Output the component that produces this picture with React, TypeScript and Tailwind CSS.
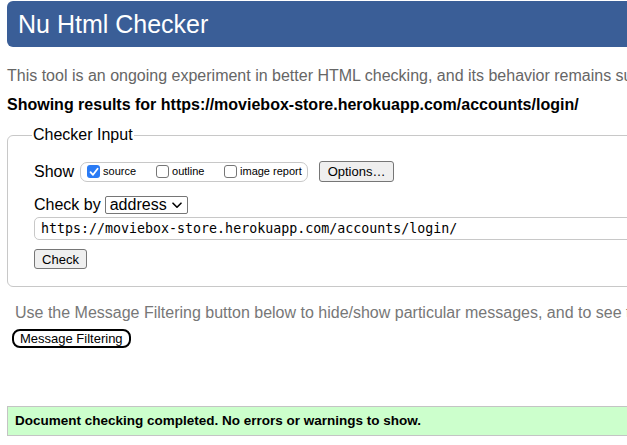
import type { ReactNode } from 'react';

const sans = 'font-["Liberation_Sans",Arial,sans-serif]';

function Box({ checked, label }: { checked?: boolean; label: string }) {
    return (
        <span className="flex items-center">
            {checked ? (
                <span className="w-[13px] h-[13px] rounded-[3px] bg-[#2a7bf5] flex items-center justify-center">
                    <svg width="10" height="10" viewBox="0 0 10 10" fill="none">
                        <path d="M1.5 5.2 L4 7.8 L8.6 1.8" stroke="white" strokeWidth="1.8" strokeLinecap="round" strokeLinejoin="round" />
                    </svg>
                </span>
            ) : (
                <span className="w-[13px] h-[13px] rounded-[3px] border border-[#767676] bg-white" />
            )}
            <span className="ml-[3px] text-[11px] leading-[13px] text-black">{label}</span>
        </span>
    );
}

function Row({ children, className = '' }: { children: ReactNode; className?: string }) {
    return <div className={`flex items-center ${className}`}>{children}</div>;
}

export default function App() {
    return (
        <div className={`w-[627px] h-[445px] overflow-hidden bg-white ${sans}`}>
            <div className="w-[1100px] pl-[7px] pt-[1px]">
                {/* header */}
                <div className="h-[46px] rounded-[6px] bg-[#3a5e97] flex items-center pl-[11px]">
                    <h1 className="text-[25px] text-white leading-none">Nu Html Checker</h1>
                </div>

                <p className="mt-[20px] text-[16px] leading-[18px] text-[#666] whitespace-nowrap">
                    This tool is an ongoing experiment in better HTML checking, and its behavior remains subject to change
                </p>
                <p className="mt-[11px] text-[16px] leading-[18px] font-bold text-black whitespace-nowrap">
                    Showing results for https://moviebox-store.herokuapp.com/accounts/login/
                </p>

                {/* checker input */}
                <fieldset className="mt-[12px] border border-[#c8c8c8] rounded-[6px] pl-[26px] pr-4 pb-[17px] pt-[17px]">
                    <legend className="-ml-[2px] px-[1px] text-[16px] leading-[18px] text-black">Checker Input</legend>

                    <Row className="h-[21px]">
                        <span className="text-[16px] leading-[18px] text-black">Show</span>
                        <div className="ml-[6px] h-[20px] w-[228px] rounded-[7px] border border-[#c8c8c8] flex items-center pl-[6px]">
                            <span className="w-[69px]"><Box checked label="source" /></span>
                            <span className="w-[68px]"><Box label="outline" /></span>
                            <Box label="image report" />
                        </div>
                        <button className="ml-[11px] h-[21px] w-[75px] border border-[#767676] rounded-[3px] bg-[#efefef] text-[13px] leading-[15px] text-black">
                            Options…
                        </button>
                    </Row>

                    <Row className="mt-[14px] h-[18px]">
                        <span className="text-[16px] leading-[18px] text-black">Check by</span>
                        <div className="ml-[4px] h-[18px] w-[83px] border border-[#767676] rounded-[2px] flex items-center justify-between pl-[4px] pr-[5px]">
                            <span className="text-[16px] text-black leading-none">address</span>
                            <svg width="10" height="7" viewBox="0 0 10 7" fill="none">
                                <path d="M1 1.2 L5 5.2 L9 1.2" stroke="black" strokeWidth="1.6" strokeLinecap="round" strokeLinejoin="round" />
                            </svg>
                        </div>
                    </Row>

                    <div className="mt-[3px] h-[23px] border border-[#c8c8c8] rounded-[5px] flex items-center pl-[6px]">
                        <span className='font-["DejaVu_Sans_Mono",monospace] text-[13.3px] leading-[16px] text-black'>
                            https://moviebox-store.herokuapp.com/accounts/login/
                        </span>
                    </div>

                    <button className="mt-[9px] h-[20px] w-[53px] border border-[#767676] rounded-[3px] bg-[#efefef] text-[13px] leading-[15px] text-black flex items-center justify-center">
                        Check
                    </button>
                </fieldset>

                <p className="mt-[17px] ml-[8px] text-[16px] leading-[18px] text-[#777] whitespace-nowrap">
                    Use the Message Filtering button below to hide/show particular messages, and to see total counts of errors and warnings.
                </p>
                <button className="mt-[7px] ml-[5px] h-[19px] px-[6px] border-2 border-black rounded-[8px] bg-white text-[13px] leading-[15px] text-black flex items-center">
                    Message Filtering
                </button>

                <div className="mt-[58px] h-[30px] border border-[#c4c4c4] bg-[#ccffcc] flex items-center pl-[7px]">
                    <span className="text-[13.5px] leading-[16px] font-bold text-black">Document checking completed. No errors or warnings to show.</span>
                </div>
            </div>
        </div>
    );
}
